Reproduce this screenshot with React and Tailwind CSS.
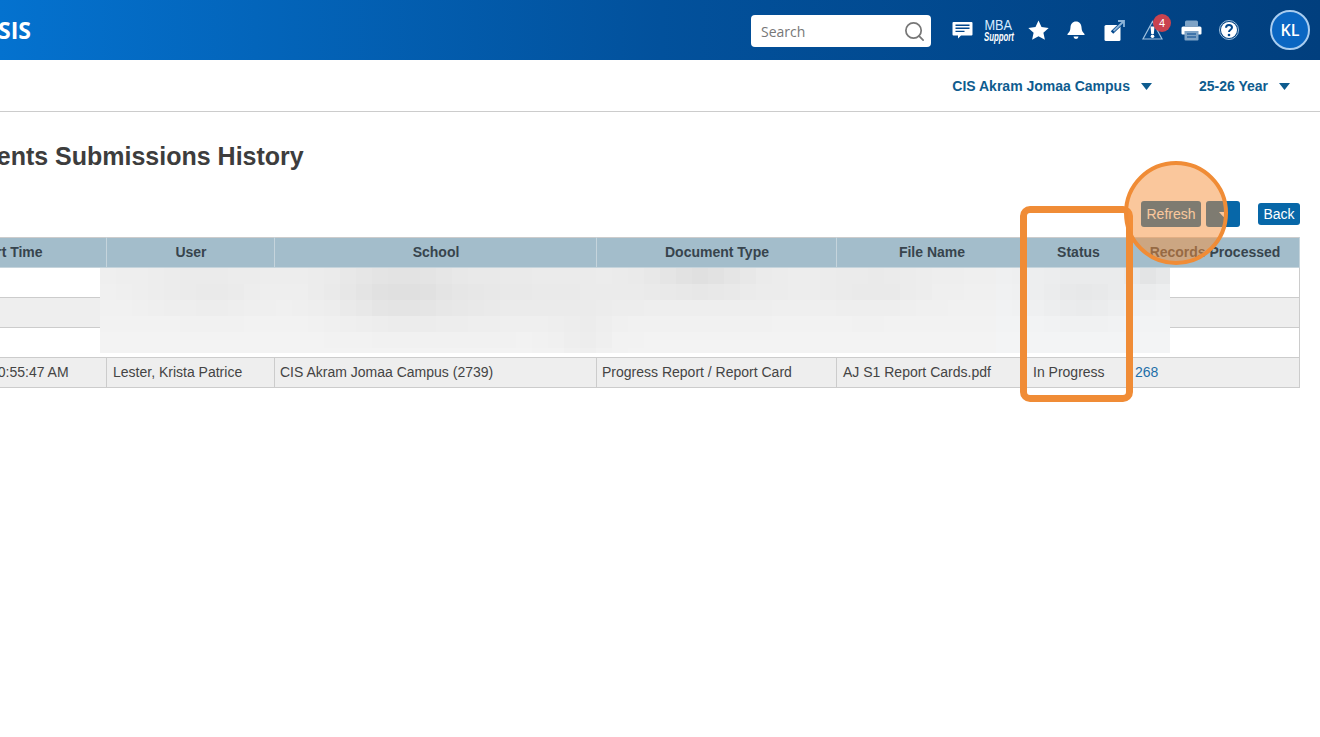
import React from 'react';
import { Search } from 'lucide-react';

// blurred-out rows in the screenshot: 16px mosaic, grey blobs on a light base
const BLOBS = [
  [205, 292, 60, 26, -6],
  [395, 292, 60, 30, -12],
  [480, 298, 130, 34, -7],
  [585, 340, 26, 30, -5],
  [700, 276, 48, 16, -12],
  [720, 295, 150, 26, -4],
  [880, 288, 50, 26, -5],
  [1085, 295, 45, 26, -9],
  [1150, 278, 25, 14, -11],
];

function cellColor(x, y) {
  let v = 243 - Math.max(0, (330 - y) / 16) * 1.2;
  BLOBS.forEach(([cx, cy, rx, ry, amt]) => {
    const d = ((x - cx) / rx) ** 2 + ((y - cy) / ry) ** 2;
    v += amt * Math.exp(-d);
  });
  v = Math.round(v);
  const tint = x > 1000 ? 2 : 0;
  return `rgb(${v},${v + (tint ? 1 : 0)},${v + tint})`;
}

function Mosaic() {
  const cells = [];
  for (let r = 0; r < 6; r++) {
    for (let c = 0; c < 67; c++) {
      cells.push(
        <rect key={`${r}-${c}`} x={c * 16} y={r * 16} width="16.5" height="16.5" fill={cellColor(100 + c * 16 + 8, 268 + r * 16 + 8)} />
      );
    }
  }
  return (
    <svg width="1070" height="85" viewBox="0 0 1070 85" shapeRendering="crispEdges" className="block">
      {cells}
    </svg>
  );
}

const ChatIcon = () => (
  <svg width="21" height="20" viewBox="0 0 21 20">
    <path d="M1.5 2h18a1 1 0 0 1 1 1v11.5a1 1 0 0 1-1 1H9l-3 3v-3H1.500a1 1 0 0 1-1-1V3a1 1 0 0 1 1-1z" fill="#fff" />
    <path d="M3.500 5.200h14M3.500 8.300h14M3.500 11.400h9" stroke="#02478c" strokeWidth="1.400" />
  </svg>
);

const StarIcon = () => (
  <svg width="21" height="20" viewBox="0 0 21 20">
    <path d="M10.500 0.500l3 6.600 7.200.8-5.300 4.800 1.500 7.100-6.400-3.600-6.400 3.600 1.500-7.100L0.300 7.900l7.200-.8z" fill="#fff" />
  </svg>
);

const BellIcon = () => (
  <svg width="18" height="20" viewBox="0 0 18 20">
    <path d="M9 1.500c3.500 0 5.300 2.500 5.500 5.800.2 3.400 1 4.900 3 6.700v1H.5v-1c2-1.800 2.800-3.300 3-6.700C3.700 4 5.500 1.500 9 1.500z" fill="#fff" />
    <path d="M6.500 16.500h5a2.500 2.500 0 0 1-5 0z" fill="#fff" />
  </svg>
);

const OpenIcon = () => (
  <svg width="21" height="21" viewBox="0 0 21 21">
    <rect x="0.500" y="5" width="16" height="16" rx="1.500" fill="#fff" />
    <path d="M8 12.500L19 2" stroke="#02478c" strokeWidth="3.500" />
    <path d="M9.500 11L19.500 1.500M14 1h6v6" stroke="#8db4d8" strokeWidth="1.800" fill="none" />
  </svg>
);

const WarnIcon = () => (
  <svg width="21" height="20" viewBox="0 0 21 20">
    <path d="M10.500 1.500L20 19H1z" fill="#02478c" stroke="#9fc0dd" strokeWidth="1.200" />
    <path d="M8.500 6.500h4l-.7 7.500H9.200z" fill="#fff" />
    <circle cx="10.500" cy="16.200" r="1.800" fill="#fff" />
  </svg>
);

const PrintIcon = () => (
  <svg width="21" height="21" viewBox="0 0 21 21">
    <path d="M4 2a1.500 1.500 0 0 1 1.500-1.500h10A1.500 1.500 0 0 1 17 2v4H4z" fill="#7ea3c6" />
    <path d="M2 6.500h17a1.500 1.500 0 0 1 1.500 1.500v5.500a1 1 0 0 1-1 1H17v-3H4v3H1.500a1 1 0 0 1-1-1V8A1.500 1.500 0 0 1 2 6.500z" fill="#fff" />
    <path d="M3.500 11h14v8.500a1 1 0 0 1-1 1h-12a1 1 0 0 1-1-1z" fill="#7ea3c6" />
    <path d="M6 14h9M6 17h9" stroke="#02478c" strokeWidth="1.200" />
  </svg>
);

const HelpIcon = () => (
  <svg width="20" height="20" viewBox="0 0 20 20">
    <circle cx="10" cy="10" r="9.500" fill="none" stroke="#9fc0dd" strokeWidth="1" />
    <circle cx="10" cy="10" r="8" fill="#fff" />
    <path d="M7 7.800c0-1.800 1.300-2.800 3-2.800s3 1 3 2.500c0 2.300-3 2.200-3 4.500" fill="none" stroke="#02478c" strokeWidth="2" />
    <circle cx="10" cy="15" r="1.300" fill="#02478c" />
  </svg>
);

const Caret = () => (
  <svg width="11" height="7" viewBox="0 0 11 7" className="block">
    <path d="M0 0h11L5.500 7z" fill="#0e5c8f" />
  </svg>
);

const columns = [
  { title: 'Start Time', cls: 'w-[197px]' },
  { title: 'User', cls: 'w-[168px]' },
  { title: 'School', cls: 'w-[322px]' },
  { title: 'Document Type', cls: 'w-[240px]' },
  { title: 'File Name', cls: 'w-[190px]' },
  { title: 'Status', cls: 'w-[103px]' },
  { title: 'Records Processed', cls: 'w-[170px]' },
];

function App() {
  return (
    <div className="relative h-[737px] w-full overflow-hidden bg-white font-['Liberation_Sans',sans-serif] text-[14px] text-[#444]">
      {/* Top bar */}
      <header className="flex h-[60px] items-center bg-gradient-to-r from-[#0472cf] via-[#02519c] to-[#013f7e] pr-[10px]">
        <span className="-ml-[2px] font-['Open_Sans',sans-serif] text-[23px] font-bold text-white">SIS</span>
        <div className="ml-auto mt-[2px] flex h-[32px] w-[180px] items-center justify-between rounded-[4px] bg-white pl-[10px] pr-[5px]">
          <span className="font-['Open_Sans',sans-serif] text-[14px] text-[#777]">Search</span>
          <Search size={23} strokeWidth={1.8} className="text-[#777]" />
        </div>
        <div className="ml-[21px] flex items-center text-white">
          <ChatIcon />
          <div className="ml-[10px] flex w-[31px] flex-col items-center">
            <span className="h-[13px] scale-x-[0.85] text-[15px] leading-[13px] text-[#d8ecff]">MBA</span>
            <span className="h-[12px] scale-x-[0.65] whitespace-nowrap text-[12px] font-bold italic leading-[12px]">Support</span>
          </div>
          <div className="ml-[14px]"><StarIcon /></div>
          <div className="ml-[18px]"><BellIcon /></div>
          <div className="ml-[19px]"><OpenIcon /></div>
          <div className="relative ml-[17px]">
            <WarnIcon />
            <span className="absolute -right-[8px] -top-[6px] flex h-[18px] w-[18px] items-center justify-center rounded-full bg-[#c9434f] text-[11px] text-white">4</span>
          </div>
          <div className="ml-[18px]"><PrintIcon /></div>
          <div className="ml-[17px]"><HelpIcon /></div>
          <div className="ml-[31px] flex h-[40px] w-[40px] items-center justify-center rounded-full border-2 border-[#a9cdf0] bg-[#0a66c2] font-['Open_Sans',sans-serif] text-[16px] font-semibold text-white">KL</div>
        </div>
      </header>

      {/* School / year selectors */}
      <div className="flex h-[52px] items-center justify-end border-b border-[#ccc] pr-[30px] pt-[2px] text-[14px] font-bold text-[#0e5c8f]">
        <span>CIS Akram Jomaa Campus</span>
        <span className="ml-[11px]"><Caret /></span>
        <span className="ml-[47px]">25-26 Year</span>
        <span className="ml-[11px]"><Caret /></span>
      </div>

      {/* Title */}
      <h1 className="-ml-[88px] mt-[27px] text-[25px] font-bold leading-[34px] text-[#3d3d3d]">Documents Submissions History</h1>

      {/* Actions */}
      <div className="mt-[28px] flex h-[26px] items-center justify-end pr-[20px] text-white">
        <button className="h-[26px] w-[60px] rounded-[3px] bg-[#0767a8]">Refresh</button>
        <button className="ml-[5px] flex h-[26px] w-[34px] items-center justify-center rounded-[3px] bg-[#0767a8]">
          <svg width="9" height="5" viewBox="0 0 9 5"><path d="M0 0h9L4.500 5z" fill="#fff" /></svg>
        </button>
        <button className="ml-[18px] h-[22px] w-[42px] rounded-[3px] bg-[#0767a8]">Back</button>
      </div>

      {/* Table, scrolled so the first column is cut off */}
      <div className="mt-[10px] flex justify-end overflow-hidden pr-[20px]">
        <table className="w-[1390px] shrink-0 table-fixed border-collapse">
          <thead>
            <tr className="h-[30px] bg-[#a3bdcb] text-[#37444d]">
              {columns.map((col) => (
                <th key={col.title} className={`${col.cls} border border-[#c5d4dc] border-t-[#ccc] pl-[1px] text-center font-bold`}>{col.title}</th>
              ))}
            </tr>
          </thead>
          <tbody>
            <tr className="h-[30px] bg-white"><td colSpan={7} className="border border-[#ccc]"></td></tr>
            <tr className="h-[30px] bg-[#eee]"><td colSpan={7} className="border border-[#ccc]"></td></tr>
            <tr className="h-[30px] bg-white"><td colSpan={7} className="border border-[#ccc]"></td></tr>
            <tr className="h-[30px] bg-[#eee]">
              <td className="border border-[#ccc] pl-[80px] whitespace-nowrap">10:55:47 AM</td>
              <td className="border border-[#ccc] px-[6px]">Lester, Krista Patrice</td>
              <td className="border border-[#ccc] px-[5px]">CIS Akram Jomaa Campus (2739)</td>
              <td className="border border-[#ccc] px-[5px]">Progress Report / Report Card</td>
              <td className="border border-[#ccc] px-[6px]">AJ S1 Report Cards.pdf</td>
              <td className="border border-[#ccc] px-[6px]">In Progress</td>
              <td className="border border-[#ccc] px-[5px] text-[#1f6fa8]">268</td>
            </tr>
          </tbody>
        </table>
      </div>

      {/* Annotations painted over the page */}
      <div className="absolute left-[100px] top-[268px]"><Mosaic /></div>
      <div className="absolute left-[1020px] top-[206px] h-[196px] w-[113px] rounded-[10px] border-[7px] border-[#f08c36]"></div>
      <div className="absolute left-[1124px] top-[161px] h-[104px] w-[104px] rounded-full border-[4px] border-[#f08c36] bg-[#f58f3a]/50"></div>
    </div>
  );
}

export default App;
